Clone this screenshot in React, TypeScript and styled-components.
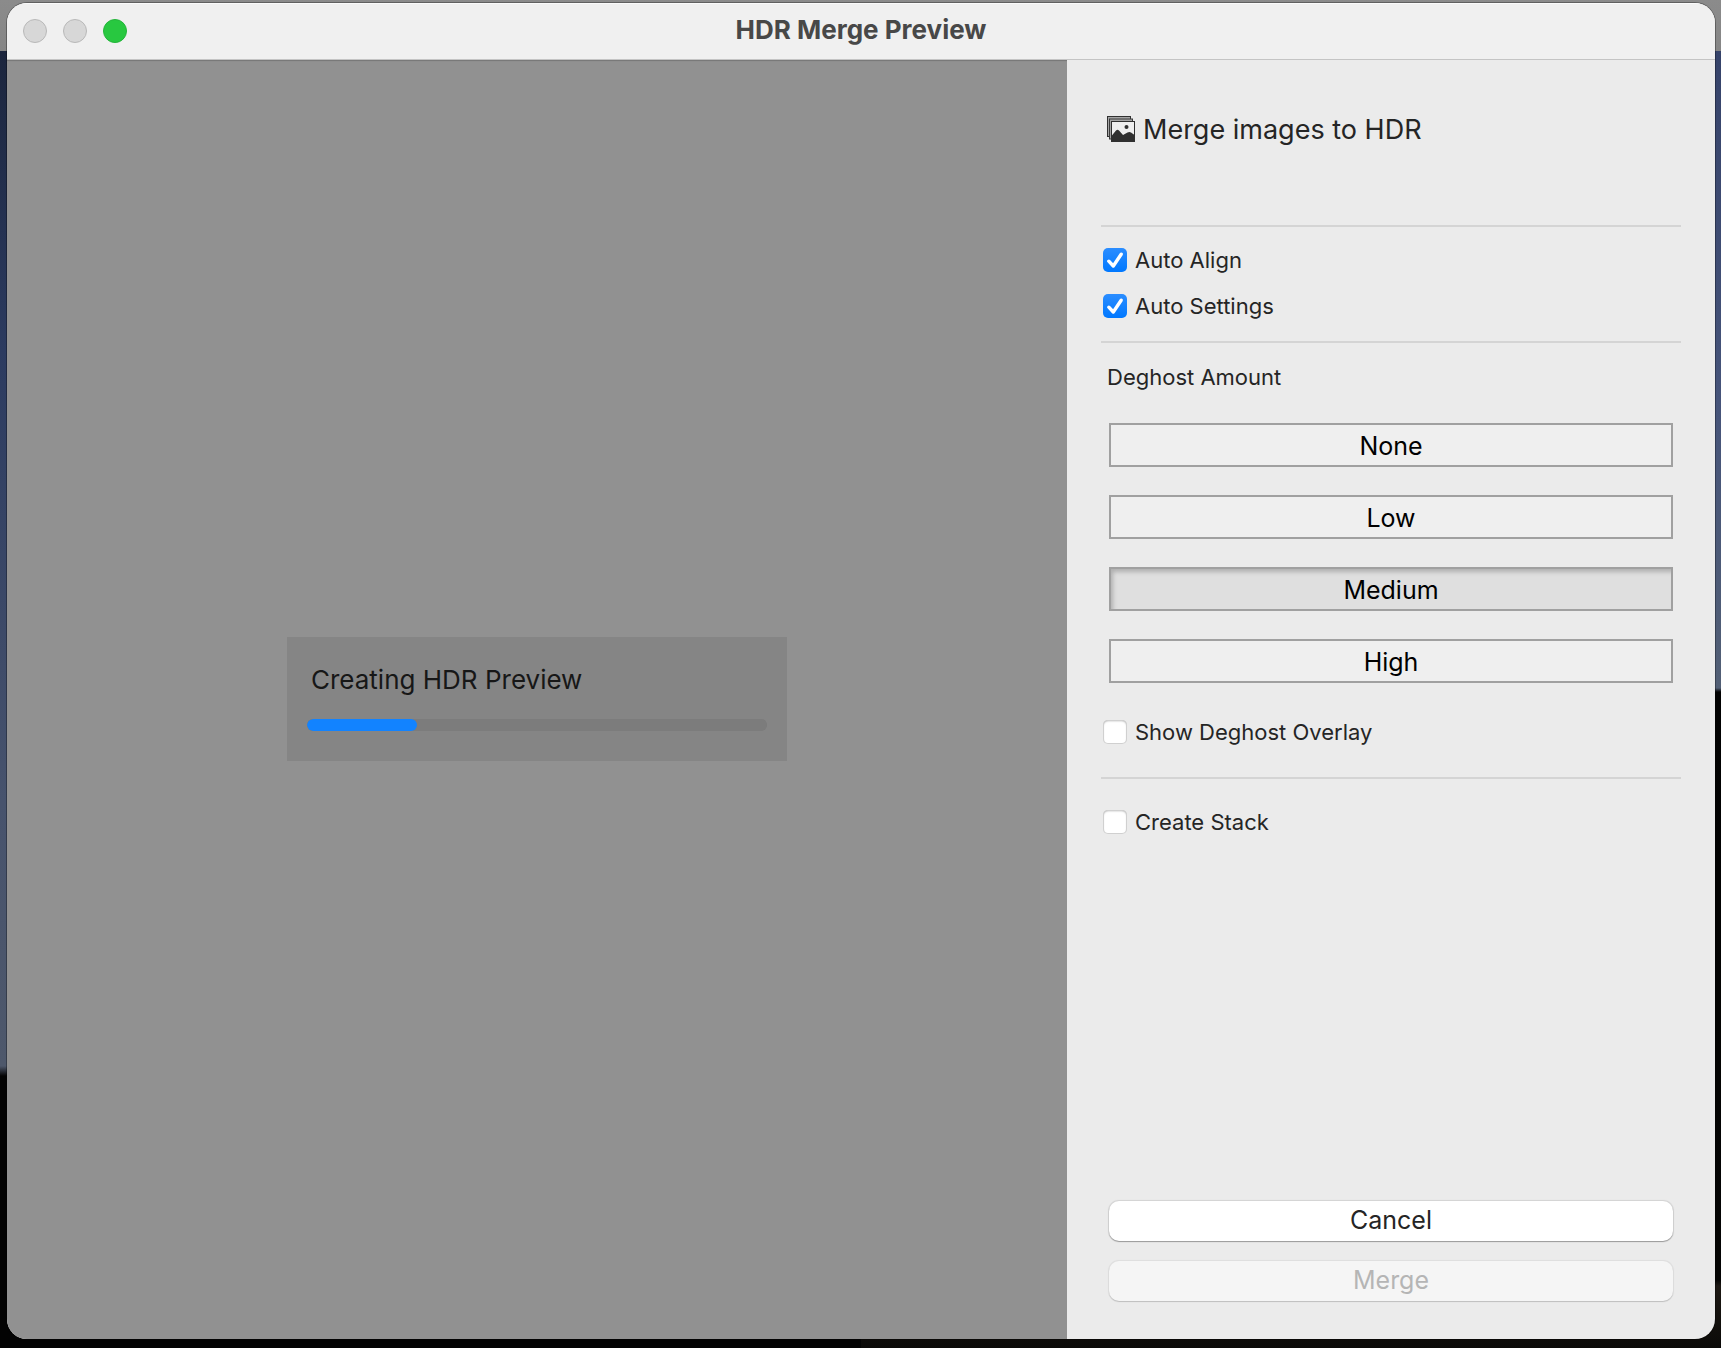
import React, { useState } from "react";
import styled, { createGlobalStyle } from "styled-components";

const GlobalStyle = createGlobalStyle`
  *, *::before, *::after { box-sizing: border-box; }
  body {
    margin: 0;
    font-family: Inter, "Liberation Sans", sans-serif;
    color: #252525;
  }
`;

const Desktop = styled.div`
  display: flex;
  min-height: 100vh;
  padding: 3px 6px 9px 7px;
  background:
    linear-gradient(#8b8b8b, #868686) top / 100% 51px no-repeat,
    linear-gradient(#1b253d 51px, #2c3b60 350px, #47536d 800px, #4e586b 1066px, #030303 1076px) left / 50% 100% no-repeat,
    linear-gradient(#36436a 51px, #46547a 400px, #525f75 688px, #020202 692px, #050504 1280px, #1d1914 1286px, #0b0a08) right / 50% 100% no-repeat,
    #050505;
`;

const Window = styled.main`
  flex: 1;
  display: flex;
  flex-direction: column;
  border-radius: 20px;
  overflow: hidden;
  background: #ebebeb;
  box-shadow: 0 0 0 1px rgba(0, 0, 0, 0.3);
`;

const TitleBar = styled.header`
  display: grid;
  grid-template-columns: 1fr auto 1fr;
  align-items: center;
  height: 57px;
  padding: 0 16px;
  background: #f0f0f0;
  border-bottom: 1px solid #c4c4c4;
  box-shadow: inset 0 1px #fbfbfb;
`;

const Lights = styled.div`
  display: flex;
  gap: 16px;
`;

const Light = styled.button<{ $active?: boolean }>`
  width: 24px;
  height: 24px;
  padding: 0;
  border-radius: 50%;
  border: 1px solid ${(p) => (p.$active ? "#24b43a" : "#b8b8b8")};
  background: ${(p) => (p.$active ? "#28c840" : "#d7d7d7")};
`;

const Title = styled.h1`
  margin: 0;
  padding-bottom: 2px;
  font-size: 26px;
  line-height: 32px;
  font-weight: 700;
  color: #484848;
`;

const Content = styled.div`
  flex: 1;
  display: flex;
`;

const Preview = styled.section`
  flex: 1;
  display: flex;
  align-items: center;
  justify-content: center;
  padding-bottom: 2px;
  background: #919191;
  box-shadow: inset 0 2px 1px -1px #777;
`;

const ProgressCard = styled.div`
  width: 500px;
  padding: 27px 20px 30px;
  background: #858585;
`;

const ProgressLabel = styled.label`
  display: block;
  padding: 0 4px;
  margin-bottom: 23px;
  font-size: 26px;
  line-height: 32px;
  color: #171717;
`;

const Progress = styled.progress`
  display: block;
  width: 100%;
  height: 12px;
  appearance: none;
  border: 0;
  border-radius: 6px;
  overflow: hidden;
  background: #7c7c7c;
  &::-webkit-progress-bar { background: #7c7c7c; border-radius: 6px; }
  &::-webkit-progress-value { background: #1283ff; border-radius: 6px; }
`;

const Sidebar = styled.aside`
  display: flex;
  flex-direction: column;
  width: 648px;
  padding: 50px 34px 38px;
`;

const Heading = styled.h2`
  display: flex;
  align-items: center;
  gap: 8px;
  margin: 0 0 75px;
  padding-left: 6px;
  font-size: 27px;
  line-height: 40px;
  font-weight: 400;
`;

const Divider = styled.hr`
  width: 100%;
  height: 2px;
  margin: 0;
  border: 0;
  background: #d4d4d4;
`;

const Checks = styled.div<{ $top: number; $bottom: number }>`
  display: flex;
  flex-direction: column;
  gap: 18px;
  padding: ${(p) => p.$top}px 2px ${(p) => p.$bottom}px;
`;

const CheckRow = styled.label`
  display: flex;
  align-items: center;
  gap: 8px;
  height: 28px;
  font-size: 22px;
  line-height: 28px;
`;

const CheckMark = styled.span`
  display: grid;
  & > * { grid-area: 1 / 1; }
  & > svg { pointer-events: none; }
`;

const CheckInput = styled.input`
  appearance: none;
  width: 24px;
  height: 24px;
  margin: 0;
  border-radius: 5px;
  background: #fff;
  box-shadow: inset 0 0 0 1px #d0d0d0, inset 0 1px 2px #aaa;
  &:checked {
    background: linear-gradient(#2b8dff, #0078ff);
    box-shadow: none;
  }
`;

const Group = styled.fieldset`
  display: flex;
  flex-direction: column;
  gap: 28px;
  min-width: 0;
  margin: 0;
  padding: 20px 8px 0 6px;
  border: 0;
`;

const GroupLabel = styled.legend`
  float: left;
  width: 100%;
  padding: 0;
  margin-bottom: 4px;
  font-size: 22px;
  line-height: 28px;
`;

const Choice = styled.button<{ $pressed: boolean }>`
  height: 44px;
  margin-left: 2px;
  padding: 2px 0 0;
  border: 2px solid #a0a0a0;
  background: ${(p) => (p.$pressed ? "#dfdfdf" : "#efefef")};
  box-shadow: ${(p) => (p.$pressed ? "inset 3px 4px 4px -1px #b0b0b0" : "none")};
  font: 25px/32px Inter, "Liberation Sans", sans-serif;
  color: #000;
`;

const Actions = styled.footer`
  display: flex;
  flex-direction: column;
  gap: 20px;
  margin-top: auto;
  padding: 0 8px;
`;

const Action = styled.button`
  height: 40px;
  padding: 0 0 2px;
  border: 0;
  border-radius: 10px;
  background: #fff;
  box-shadow: 0 0 1px 1px rgba(0, 0, 0, 0.1), 0 1px 1px rgba(0, 0, 0, 0.28);
  font: 25px/32px Inter, "Liberation Sans", sans-serif;
  color: #252525;
  &:disabled {
    background: #f5f5f5;
    color: #b5b5b5;
    box-shadow: 0 0 1px 1px rgba(0, 0, 0, 0.06), 0 1px 1px rgba(0, 0, 0, 0.14);
  }
`;

const IconBox = styled.span`
  display: flex;
  padding-bottom: 3px;
`;

const StackIcon = () => (
  <IconBox>
    <svg width="28" height="26" viewBox="0 0 28 26" aria-hidden="true">
      <path d="M0 0h24v21H0z" fill="#303030" />
      <path d="M1 1h22v19H1z" fill="#a4a4a4" />
      <path d="M2 2.500h24v21H2z" fill="#3a3a3a" />
      <path d="M3 3.500h22v19H3z" fill="#a4a4a4" />
      <path d="M4 5h24v21H4z" fill="#303030" />
      <path d="M5 6h22v19H5z" fill="#efefef" />
      <path d="M4.500 20l4.500-5.500q1.500-1.500 3 0l4 4.500 4.500-2.500q2-.8 3.500 0L27.500 19V26h-23z" fill="#303030" />
      <circle cx="19.500" cy="11" r="2" fill="#303030" />
    </svg>
  </IconBox>
);

function Checkbox({ label, initial = false }: { label: string; initial?: boolean }) {
  const [checked, setChecked] = useState(initial);
  return (
    <CheckRow>
      <CheckMark>
        <CheckInput type="checkbox" checked={checked} onChange={() => setChecked(!checked)} />
        {checked && (
          <svg width="24" height="24" viewBox="0 0 24 24" aria-hidden="true">
            <path d="M5.800 13.200l4.500 4.800L18.200 6.200" fill="none" stroke="#fff" strokeWidth="3.400" strokeLinecap="round" strokeLinejoin="round" />
          </svg>
        )}
      </CheckMark>
      {label}
    </CheckRow>
  );
}

const amounts = ["None", "Low", "Medium", "High"];

export default function App() {
  const [amount, setAmount] = useState("Medium");
  return (
    <>
      <GlobalStyle />
      <Desktop>
        <Window>
          <TitleBar>
            <Lights>
              <Light aria-label="Close" />
              <Light aria-label="Minimize" />
              <Light aria-label="Zoom" $active />
            </Lights>
            <Title>HDR Merge Preview</Title>
          </TitleBar>
          <Content>
            <Preview>
              <ProgressCard>
                <ProgressLabel htmlFor="progress">Creating HDR Preview</ProgressLabel>
                <Progress id="progress" value={24} max={100} />
              </ProgressCard>
            </Preview>
            <Sidebar>
              <Heading>
                <StackIcon />
                Merge images to HDR
              </Heading>
              <Divider />
              <Checks $top={19} $bottom={21}>
                <Checkbox label="Auto Align" initial />
                <Checkbox label="Auto Settings" initial />
              </Checks>
              <Divider />
              <Group>
                <GroupLabel>Deghost Amount</GroupLabel>
                {amounts.map((a) => (
                  <Choice key={a} type="button" $pressed={a === amount} aria-pressed={a === amount} onClick={() => setAmount(a)}>
                    {a}
                  </Choice>
                ))}
              </Group>
              <Checks $top={35} $bottom={31}>
                <Checkbox label="Show Deghost Overlay" />
              </Checks>
              <Divider />
              <Checks $top={29} $bottom={29}>
                <Checkbox label="Create Stack" />
              </Checks>
              <Actions>
                <Action type="button">Cancel</Action>
                <Action type="button" disabled>Merge</Action>
              </Actions>
            </Sidebar>
          </Content>
        </Window>
      </Desktop>
    </>
  );
}
